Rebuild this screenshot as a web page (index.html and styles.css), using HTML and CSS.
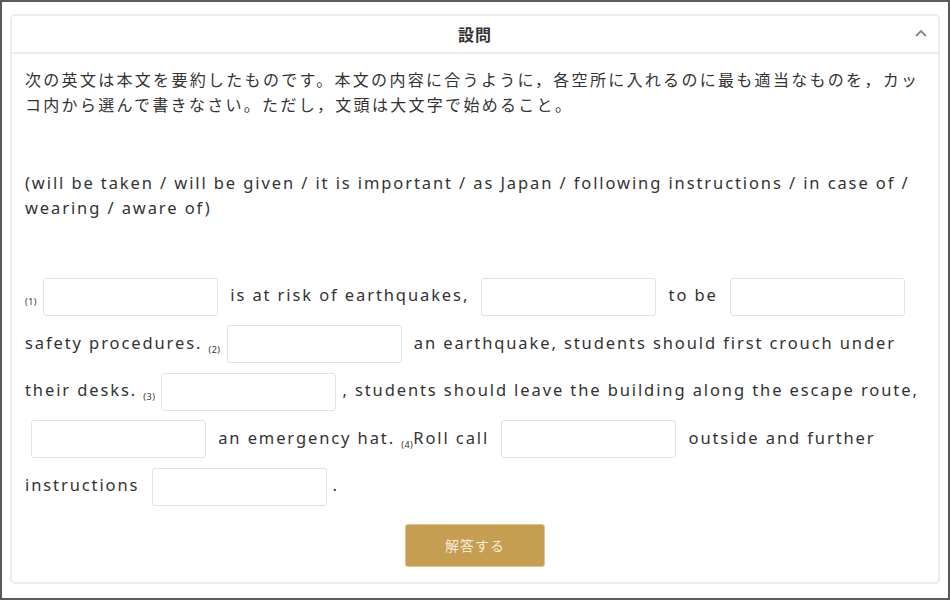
FILE: index.html
```html
<!DOCTYPE html>
<html lang="ja">
<head>
    <meta charset="UTF-8">
    <title>設問</title>
    <link rel="stylesheet" href="styles.css">
</head>
<body>
    <div class="frame">
        <div class="question">
            <div class="question-head">
                <span class="question-title">設問</span>
                <span class="toggle"><svg width="14" height="10" viewBox="0 0 14 10"><path d="M2 8 L7 3 L12 8" fill="none" stroke="#888" stroke-width="1.8"/></svg></span>
            </div>
            <div class="question-body">
                <p class="lead">次の英文は本文を要約したものです。本文の内容に合うように，各空所に入れるのに最も適当なものを，カッコ内から選んで書きなさい。ただし，文頭は大文字で始めること。</p>

                <p class="choices">(will be taken / will be given / it is important / as Japan / following instructions / in case of / wearing / aware of)</p>

                <p class="fill"><span class="num">(1)</span><input class="blank" type="text"> is at risk of earthquakes, <input class="blank" type="text"> to be <input class="blank" type="text"> safety procedures. <span class="num">(2)</span><input class="blank" type="text"> an earthquake, students should first crouch under their desks. <span class="num">(3)</span><input class="blank" type="text">, students should leave the building along the escape route, <input class="blank" type="text"> an emergency hat. <span class="num">(4)</span>Roll call <input class="blank" type="text"> outside and further instructions <input class="blank" type="text">.</p>

                <div class="actions">
                    <button class="answer-btn">解答する</button>
                </div>
            </div>
        </div>
    </div>
</body>
</html>
```

FILE: styles.css
```css
html, body {
    margin: 0;
    padding: 0;
}
body {
    font-family: "Noto Sans", "Noto Sans CJK JP", sans-serif;
    color: #333;
    background-color: #fff;
}
.frame {
    box-sizing: border-box;
    width: 950px;
    height: 600px;
    border: 2px solid #5a5a5a;
    padding: 12px 8px 0 8px;
}
.question {
    border: 2px solid #ececec;
    border-radius: 5px;
    background-color: #fff;
}
.question-head {
    height: 36px;
    display: flex;
    align-items: center;
    justify-content: center;
    position: relative;
    border-bottom: 2px solid #ececec;
}
.question-title {
    font-family: "Noto Sans CJK JP", sans-serif;
    font-weight: bold;
    font-size: 16px;
    letter-spacing: 1px;
}
.toggle {
    position: absolute;
    right: 10px;
    top: 12px;
    display: flex;
}
.question-body {
    padding: 13px 13px 15px 13px;
}
.lead {
    font-family: "Noto Sans CJK JP", sans-serif;
    font-size: 16px;
    letter-spacing: 2.3px;
    line-height: 25px;
    margin: 0;
}
.choices {
    font-size: 16.5px;
    letter-spacing: 1.9px;
    line-height: 25px;
    margin: 53px 0 0 0;
}
.fill {
    font-size: 16.5px;
    letter-spacing: 1.9px;
    line-height: 47.5px;
    margin: 51px 0 0 0;
}
.num {
    font-size: 9px;
    letter-spacing: 0.5px;
    vertical-align: -4px;
    line-height: 1;
}
.blank {
    box-sizing: border-box;
    width: 175px;
    height: 38px;
    border: 1px solid #e3e3e3;
    border-radius: 3px;
    margin: 0 6px;
    vertical-align: middle;
    padding: 0 8px;
    font-size: 16px;
}
.actions {
    display: flex;
    justify-content: center;
    margin-top: 15px;
}
.answer-btn {
    width: 140px;
    height: 43px;
    background-color: #c69e52;
    border: 1px solid #e0c48e;
    border-radius: 3px;
    color: #f6ead4;
    font-family: "Noto Sans CJK JP", sans-serif;
    font-size: 14px;
    letter-spacing: 1px;
}
```
